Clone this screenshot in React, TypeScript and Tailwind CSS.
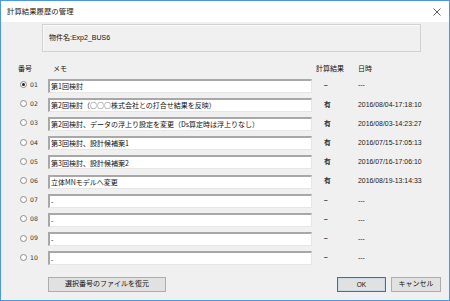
import React from 'react';

type Row = { no: string; memo: string; result: string; date: string };

const rows: Row[] = [
  { no: '01', memo: '第1回検討', result: '−', date: '---' },
  { no: '02', memo: '第2回検討（○○○株式会社との打合せ結果を反映）', result: '有', date: '2016/08/04-17:18:10' },
  { no: '03', memo: '第2回検討、データの浮上り設定を変更（Ds算定時は浮上りなし）', result: '有', date: '2016/08/03-14:23:27' },
  { no: '04', memo: '第3回検討、設計候補案1', result: '有', date: '2016/07/15-17:05:13' },
  { no: '05', memo: '第3回検討、設計候補案2', result: '有', date: '2016/07/16-17:06:10' },
  { no: '06', memo: '立体MNモデルへ変更', result: '有', date: '2016/08/19-13:14:33' },
  { no: '07', memo: '-', result: '−', date: '---' },
  { no: '08', memo: '-', result: '−', date: '---' },
  { no: '09', memo: '-', result: '−', date: '---' },
  { no: '10', memo: '-', result: '−', date: '---' },
];

function Radio({ checked }: { checked: boolean }) {
  return (
    <span className="flex h-[7px] w-[7px] items-center justify-center rounded-full border border-[#8c8c8c] bg-white">
      {checked && <span className="h-[3px] w-[3px] rounded-full bg-[#222]" />}
    </span>
  );
}

export default function App() {
  return (
    <div className="flex h-[301px] w-[450px] flex-col border border-[#4b97e3] bg-[#f0f0f0] font-['Liberation_Sans','Noto_Sans_CJK_JP',sans-serif] text-[7px] text-[#111]">
      {/* Title bar */}
      <div className="flex h-[21px] shrink-0 items-center justify-between bg-white pl-[6px] pr-[7px]">
        <span className="text-[7.4px] text-[#222]">計算結果履歴の管理</span>
        <svg width="8" height="8" viewBox="0 0 8 8" className="mr-[1px]">
          <path d="M0.5 0.5 L7.5 7.5 M7.5 0.5 L0.5 7.5" stroke="#333" strokeWidth="0.8" />
        </svg>
      </div>

      {/* 物件名 */}
      <div className="ml-[41px] mt-[2px] flex h-[28px] w-[379px] items-center border border-[#d2d2d2] pl-[6px] shadow-[inset_1px_1px_0_#fafafa]">
        <span>物件名:Exp2_BUS6</span>
      </div>

      {/* Header */}
      <div className="mt-[11px] flex h-[13px] items-center">
        <span className="ml-[17px] w-[35px]">番号</span>
        <span className="w-[263px]">メモ</span>
        <span className="w-[42px]">計算結果</span>
        <span>日時</span>
      </div>

      {/* Rows */}
      <div className="flex flex-col">
        {rows.map((r, i) => (
          <div key={r.no} className="flex h-[19.2px] items-center">
            <div className="ml-[19px] flex w-[28px] items-center gap-[3px] -translate-y-[1px]">
              <Radio checked={i === 0} />
              <span className="font-['DejaVu_Sans',sans-serif] text-[6.2px] text-[#333]">{r.no}</span>
            </div>
            <div className="flex h-[14px] w-[264px] items-center overflow-hidden whitespace-nowrap border-t-2 border-l-2 border-b border-r border-t-[#a8a8a8] border-l-[#a8a8a8] border-b-[#e6e6e6] border-r-[#e6e6e6] bg-white pl-[1px] font-['Noto_Sans_CJK_JP',sans-serif]">
              {r.memo}
            </div>
            <div className="w-[46px] pl-[12px] text-[6.8px] font-bold text-[#333]">{r.result}</div>
            <div className="text-[6.9px] text-[#222]">{r.date}</div>
          </div>
        ))}
      </div>

      {/* Buttons */}
      <div className="mt-[9px] flex h-[15px] items-center">
        <button className="ml-[47px] flex h-[15px] w-[118px] items-center justify-center border border-[#adadad] bg-[#e1e1e1] text-[7px]">
          選択番号のファイルを復元
        </button>
        <button className="ml-[171px] flex h-[15px] w-[49px] items-center justify-center border border-[#4a6f93] bg-[#e1e1e1] text-[6.5px] shadow-[inset_0_0_0_1px_#c9d9e8]">
          OK
        </button>
        <button className="ml-[5px] flex h-[15px] w-[50px] items-center justify-center border border-[#adadad] bg-[#e1e1e1] text-[7px]">
          キャンセル
        </button>
      </div>
    </div>
  );
}
